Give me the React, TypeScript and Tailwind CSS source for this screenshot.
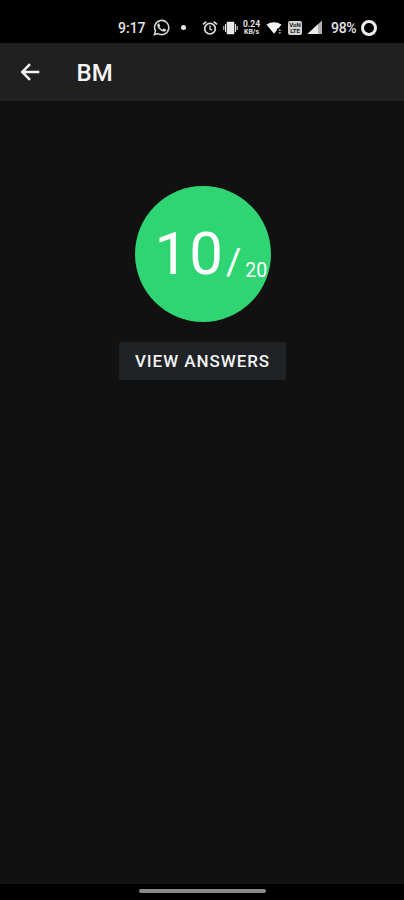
import React from "react";

function WhatsAppIcon() {
  return (
    <svg width="17" height="17" viewBox="0 0 24 24" fill="#d8d8d8">
      <path d="M17.47 14.38c-.3-.15-1.76-.87-2.03-.97-.27-.1-.47-.15-.67.15-.2.3-.77.97-.94 1.16-.17.2-.35.22-.64.08-.3-.15-1.26-.46-2.39-1.48-.88-.79-1.48-1.76-1.65-2.06-.17-.3-.02-.46.13-.6.13-.14.3-.35.45-.52.15-.18.2-.3.3-.5.1-.2.05-.37-.03-.52-.07-.15-.67-1.61-.91-2.21-.24-.58-.49-.5-.67-.51l-.57-.01c-.2 0-.52.07-.79.37-.27.3-1.04 1.02-1.04 2.48s1.07 2.88 1.21 3.07c.15.2 2.1 3.2 5.08 4.49 3 1.2 3.5.9 4.1.8.6-.1 1.76-.72 2-1.41.25-.7.25-1.29.18-1.42-.07-.12-.27-.2-.57-.35z" />
      <path
        d="M2 22l1.5-5.2A10 10 0 1 1 7.200 20.600z"
        fill="none"
        stroke="#d8d8d8"
        strokeWidth="2.2"
      />
    </svg>
  );
}

function AlarmIcon() {
  return (
    <svg width="16" height="16" viewBox="0 0 16 16" fill="none" stroke="#dedede">
      <circle cx="8" cy="8.700" r="5.300" strokeWidth="1.700" />
      <path d="M8 5.600v3.400l2.300 1.300" strokeWidth="1.300" />
      <path d="M1 4.400L4.300 1.700M15 4.400L11.700 1.700" strokeWidth="1.700" />
    </svg>
  );
}

function VibrateIcon() {
  return (
    <svg width="15" height="14" viewBox="0 0 15 14" fill="#e8e8e8">
      <rect x="3.700" y="0.700" width="7.600" height="12.600" rx="1" />
      <path d="M2 3h1v8H2zM0.300 5h1v4h-1zM12 3h1v8h-1zM13.700 5h1v4h-1z" />
    </svg>
  );
}

function WifiIcon() {
  return (
    <svg width="18" height="14" viewBox="0 0 18 14" fill="#f2f2f2">
      <path d="M0.500 3.600C4.800 0.300 11.200 0.300 15.500 3.600L12.400 7.400H11V9L8 12.700z" />
      <path d="M13.800 8l1.500 1.800h-3zM13.800 13l1.500-1.800h-3z" opacity="0.75" />
    </svg>
  );
}

function SignalIcon() {
  return (
    <svg width="16" height="15" viewBox="0 0 16 15" fill="#ececec">
      <path d="M15 0.500V14H0.500z" opacity="0.75" />
      <path d="M11 4.200V14H0.500z" />
    </svg>
  );
}

function StatusBar() {
  return (
    <div className="flex h-[43px] shrink-0 items-center bg-black pt-3 pl-[118px] text-[#e4e4e4]">
      <span className="w-[35px] text-[14px] leading-4 font-medium">9:17</span>
      <WhatsAppIcon />
      <span className="ml-[11px] size-[5px] rounded-full bg-[#e8e8e8]" />
      <span className="ml-4">
        <AlarmIcon />
      </span>
      <span className="ml-[5px]">
        <VibrateIcon />
      </span>
      <div className="ml-[4px] flex w-[19px] flex-col items-center font-bold">
        <span className="text-[8.500px] leading-[8px]">0.24</span>
        <span className="text-[7px] leading-[8px]">KB/s</span>
      </div>
      <span className="ml-[5px]">
        <WifiIcon />
      </span>
      <div className="ml-[4px] flex size-[14px] flex-col items-center justify-center rounded-[2px] bg-[#d2d2d2] font-bold text-[#202020]">
        <span className="text-[6px] leading-[6px]">VoN</span>
        <span className="text-[6px] leading-[6px]">LTE</span>
      </div>
      <span className="ml-[5px]">
        <SignalIcon />
      </span>
      <span className="ml-[8px] w-[30px] text-[14px] leading-4 font-medium tracking-[-0.3px]">98%</span>
      <span className="size-4 rounded-full border-[3px] border-[#eeeeee]" />
    </div>
  );
}

function AppBar() {
  return (
    <header className="flex h-[58px] shrink-0 items-center bg-[#202020] pl-5 text-[#f4f4f4]">
      <svg
        width="21"
        height="20"
        viewBox="0 0 21 20"
        fill="none"
        stroke="currentColor"
        strokeWidth="2.500"
      >
        <path d="M19.300 10H2.500M10 2.200L2.200 10l7.800 7.800" />
      </svg>
      <h1 className="ml-[35.500px] pt-px text-[24px] leading-7 font-medium">BM</h1>
    </header>
  );
}

function Score() {
  return (
    <div className="flex size-[136px] items-baseline rounded-full bg-[#2fd573] pl-[20px] whitespace-nowrap text-white">
      <span className="text-[60px] leading-[136px] tracking-[1px]">10</span>
      <span className="ml-[2px] text-[37px] leading-none">/</span>
      <span className="relative top-[3px] ml-[4px] text-[19.500px] leading-none">20</span>
    </div>
  );
}

export default function App() {
  return (
    <div className="flex h-[900px] w-[404px] flex-col overflow-hidden bg-[#111111] font-['Roboto',sans-serif]">
      <StatusBar />
      <AppBar />
      <main className="flex grow flex-col items-center pt-[85px] pl-px">
        <Score />
        <button className="mt-5 h-[38px] w-[167px] rounded-[2px] bg-[#202326] pt-[2px] text-[17px] font-medium tracking-[0.950px] text-[#f2f2f2]">
          VIEW ANSWERS
        </button>
      </main>
      <footer className="flex h-4 shrink-0 justify-center bg-black pt-[5px]">
        <div className="h-[4px] w-[127px] rounded-full bg-[#8b898b]" />
      </footer>
    </div>
  );
}
